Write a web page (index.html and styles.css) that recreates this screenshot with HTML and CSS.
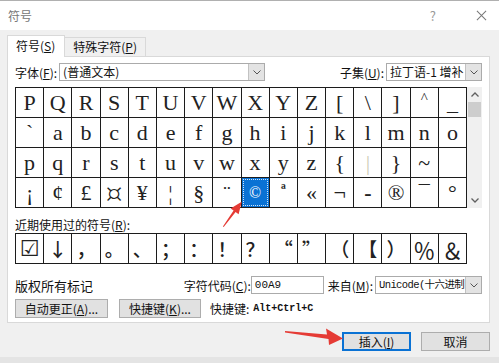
FILE: index.html
```html
<!DOCTYPE html>
<html lang="zh-CN">
<head>
<meta charset="UTF-8" />
<title>符号</title>
<link rel="stylesheet" href="styles.css">
</head>
<body>
<div class="dialog">
  <!-- title bar -->
  <div class="titlebar">
    <span class="title">符号</span>
    <span class="help">?</span>
    <svg class="close" viewBox="0 0 12 12"><path d="M1 1 L11 11 M11 1 L1 11" stroke="#777" stroke-width="1.1" fill="none"/></svg>
  </div>

  <div class="body">
    <div class="tabs">
      <div class="tab active">符号(<u>S</u>)</div>
      <div class="tab">特殊字符(<u>P</u>)</div>
    </div>

    <div class="panel">
      <!-- font / subset -->
      <div class="font-row">
        <span class="label">字体(<u>F</u>):</span>
        <div class="select font-select">
          <span class="value">(普通文本)</span>
          <span class="drop"><svg viewBox="0 0 8 5"><path d="M0.5 0.5 L4 4 L7.5 0.5" stroke="#555" fill="none"/></svg></span>
        </div>
        <span class="label subset-label">子集(<u>U</u>):</span>
        <div class="select subset-select">
          <span class="value">拉丁语-1 增补</span>
          <span class="drop"><svg viewBox="0 0 8 5"><path d="M0.5 0.5 L4 4 L7.5 0.5" stroke="#555" fill="none"/></svg></span>
        </div>
      </div>

      <!-- symbol chart -->
      <div class="chart">
        <div class="grid">
          <div class="cell">P</div><div class="cell">Q</div><div class="cell">R</div><div class="cell">S</div>
          <div class="cell">T</div><div class="cell">U</div><div class="cell">V</div><div class="cell">W</div>
          <div class="cell">X</div><div class="cell">Y</div><div class="cell">Z</div><div class="cell">[</div>
          <div class="cell">\</div><div class="cell">]</div><div class="cell caret">^</div><div class="cell">_</div>

          <div class="cell">`</div><div class="cell">a</div><div class="cell">b</div><div class="cell">c</div>
          <div class="cell">d</div><div class="cell">e</div><div class="cell">f</div><div class="cell">g</div>
          <div class="cell">h</div><div class="cell">i</div><div class="cell">j</div><div class="cell">k</div>
          <div class="cell">l</div><div class="cell">m</div><div class="cell">n</div><div class="cell">o</div>

          <div class="cell">p</div><div class="cell">q</div><div class="cell">r</div><div class="cell">s</div>
          <div class="cell">t</div><div class="cell">u</div><div class="cell">v</div><div class="cell">w</div>
          <div class="cell">x</div><div class="cell">y</div><div class="cell">z</div><div class="cell">{</div>
          <div class="cell faint">|</div><div class="cell">}</div><div class="cell">~</div><div class="cell"></div>

          <div class="cell">¡</div><div class="cell">¢</div><div class="cell">£</div><div class="cell big">¤</div>
          <div class="cell">¥</div><div class="cell">¦</div><div class="cell">§</div><div class="cell">¨</div>
          <div class="cell selected"><span>©</span></div><div class="cell small">ª</div><div class="cell">«</div><div class="cell">¬</div>
          <div class="cell bold">-</div><div class="cell">®</div><div class="cell">¯</div><div class="cell">°</div>
        </div>
        <div class="scrollbar">
          <span class="sb-btn"><svg viewBox="0 0 8 5"><path d="M0.5 4.5 L4 1 L7.5 4.5" stroke="#606060" stroke-width="1.3" fill="none"/></svg></span>
          <span class="sb-thumb"></span>
          <span class="sb-track"></span>
          <span class="sb-btn"><svg viewBox="0 0 8 5"><path d="M0.5 0.5 L4 4 L7.5 0.5" stroke="#606060" stroke-width="1.3" fill="none"/></svg></span>
        </div>
      </div>

      <!-- recently used -->
      <div class="recent-label">近期使用过的符号(<u>R</u>):</div>
      <div class="grid recent">
        <div class="cell sym">☑</div><div class="cell">↓</div><div class="cell">，</div><div class="cell">。</div>
        <div class="cell">、</div><div class="cell">；</div><div class="cell">：</div><div class="cell">！</div>
        <div class="cell">？</div><div class="cell">“</div><div class="cell">”</div><div class="cell">（</div>
        <div class="cell">【</div><div class="cell">）</div><div class="cell wide">％</div><div class="cell wide">＆</div>
      </div>

      <!-- name / code -->
      <div class="info-row">
        <span class="name">版权所有标记</span>
        <span class="label code-label">字符代码(<u>C</u>):</span>
        <div class="input">00A9</div>
        <span class="label from-label">来自(<u>M</u>):</span>
        <div class="select from-select">
          <span class="value mono">Unicode(十六进制</span>
          <span class="drop"><svg viewBox="0 0 8 5"><path d="M0.5 0.5 L4 4 L7.5 0.5" stroke="#555" fill="none"/></svg></span>
        </div>
      </div>

      <div class="btn-row">
        <button class="btn autocorrect">自动更正(<u>A</u>)...</button>
        <button class="btn shortcut">快捷键(<u>K</u>)...</button>
        <span class="label">快捷键:</span>
        <span class="keys">Alt+Ctrl+C</span>
      </div>
    </div>

    <div class="footer">
      <button class="btn default">插入(<u>I</u>)</button>
      <button class="btn">取消</button>
    </div>
  </div>

  <!-- annotation arrows -->
  <svg class="marks" viewBox="0 0 499 363">
    <polygon fill="#e53b35" points="222.9,226.4 233.6,210.5 230.6,208.4 241.7,201.7 238.6,214.2 235.6,212.1 223.7,227.0"/>
    <polygon fill="#e53b35" points="285,331 327,334.5 326,328.5 343,338.5 329,345 328.5,339 285,332.6"/>
  </svg>
</div>
</body>
</html>
```

FILE: styles.css
```css
* { box-sizing: border-box; margin: 0; padding: 0; }
html, body { width: 499px; height: 363px; overflow: hidden; background: #e4e4e4; font-family: "Noto Sans CJK SC", "Noto Sans", sans-serif; font-size: 12px; color: #111; }
u { text-decoration: underline; text-underline-offset: 1px; }

.dialog { position: relative; height: 357px; background: #f0f0f0; border-top: 1px solid #b0b0b0; }

/* --------------------  Title bar  --------------------- */
.titlebar { height: 29px; background: #fff; display: flex; align-items: center; padding-left: 8px; }
.title { flex: 1; color: #777; font-size: 12px; }
.help { color: #999; font-size: 13px; margin-right: 40px; }
.close { width: 11px; height: 11px; margin-right: 12px; }

/* --------------------  Tabs  --------------------------- */
.body { padding: 5px 9px 0 7px; }
.tabs { display: flex; align-items: flex-end; height: 21px; }
.tab { height: 19px; padding: 0 8px; border: 1px solid #d9d9d9; border-bottom: none; background: #f0f0f0; line-height: 18px; }
.tab + .tab { border-left: none; }
.tab.active { height: 22px; margin-bottom: -1px; background: #fff; position: relative; z-index: 1; line-height: 20px; padding: 0 9px 0 8px; }

.panel { height: 267px; background: #fff; border: 1px solid #d9d9d9; padding: 6px 7px 4px 7px; }

/* --------------------  Selects & inputs  ------------- */
.font-row { display: flex; align-items: center; height: 18px; }
.label { white-space: nowrap; }
.select { display: flex; height: 18px; border: 1px solid #ababab; background: #fff; overflow: hidden; }
.select .value { flex: 1; padding-left: 3px; line-height: 16px; white-space: nowrap; overflow: hidden; }
.drop { width: 16px; display: flex; align-items: center; justify-content: center; background: #e3e3e3; border-left: 1px solid #c2c2c2; }
.drop svg { width: 8px; height: 5px; }
.font-select { width: 206px; margin-left: 2px; }
.subset-label { margin-left: auto; }
.subset-select { width: 96px; margin-left: 2px; }

/* --------------------  Symbol chart  ------------------ */
.chart { display: flex; margin-top: 6px; }
.grid { width: 452px; display: grid; grid-template-columns: repeat(16, 1fr); grid-auto-rows: 29px; gap: 1px; background: #1c1c1c; border: 1px solid #1c1c1c; }
.cell { background: #fff; display: flex; align-items: center; justify-content: center; font-family: "Liberation Serif", serif; font-size: 22px; line-height: 1; color: #222; overflow: hidden; }
.cell.faint { color: #cfcdb8; }
.cell.caret { font-size: 15px; align-items: flex-start; padding-top: 3px; }
.cell.big { font-family: "DejaVu Sans", sans-serif; font-size: 27px; font-weight: 300; }
.cell.small { font-size: 16px; align-items: flex-start; padding-top: 4px; font-weight: bold; }
.cell.bold { font-weight: bold; }
.cell.selected { background: #0a72d4; padding: 1px; }
.cell.selected span { width: 100%; height: 100%; display: flex; align-items: center; justify-content: center; border: 1px dotted #cfe4f7; color: #fff; font-size: 16px; }

.scrollbar { width: 15px; display: flex; flex-direction: column; background: #f0f0f0; }
.sb-btn { height: 15px; display: flex; align-items: center; justify-content: center; }
.sb-btn svg { width: 8px; height: 5px; }
.sb-thumb { height: 15px; margin: 0 1px; background: #cdcdcd; }
.sb-track { flex: 1; }

/* --------------------  Recent row  -------------------- */
.recent-label { margin-top: 9px; height: 16px; line-height: 16px; }
.grid.recent .cell { font-family: "Noto Sans CJK SC", sans-serif; font-size: 19px; font-weight: 500; }
.grid.recent .cell.sym { font-family: "DejaVu Sans", sans-serif; font-size: 22px; font-weight: normal; }
.grid.recent .cell.wide { font-size: 22px; font-weight: normal; }

/* --------------------  Info + buttons  ---------------- */
.info-row { display: flex; align-items: center; height: 18px; margin-top: 12px; }
.name { font-size: 13px; }
.code-label { margin-left: auto; }
.input { width: 73px; height: 18px; border: 1px solid #ababab; padding-left: 3px; font-family: "Liberation Mono", monospace; font-size: 11px; line-height: 16px; }
.from-label { margin-left: 4px; }
.from-select { width: 107px; margin-left: 2px; }
.mono { font-family: "Liberation Mono", "Noto Sans CJK SC", monospace; font-size: 10.5px; letter-spacing: -0.6px; }

.btn-row { display: flex; align-items: center; height: 19px; margin-top: 5px; }
.btn { height: 19px; background: #e1e1e1; border: 1px solid #adadad; font-family: inherit; font-size: 12px; color: #111; line-height: 16px; }
.autocorrect { width: 93px; }
.shortcut { width: 82px; margin: 0 9px 0 11px; }
.keys { margin-left: 4px; font-family: "Liberation Mono", monospace; font-weight: bold; font-size: 10px; }

.footer { display: flex; justify-content: flex-end; gap: 10px; margin-top: 9px; }
.footer .btn { width: 69px; height: 19px; }
.footer .btn.default { border: 1px solid #0a72d4; box-shadow: inset 0 0 0 1px #0a72d4; }

/* --------------------  Annotation overlay  ------------ */
.marks { position: absolute; top: -1px; left: 0; width: 499px; height: 363px; pointer-events: none; }
```
